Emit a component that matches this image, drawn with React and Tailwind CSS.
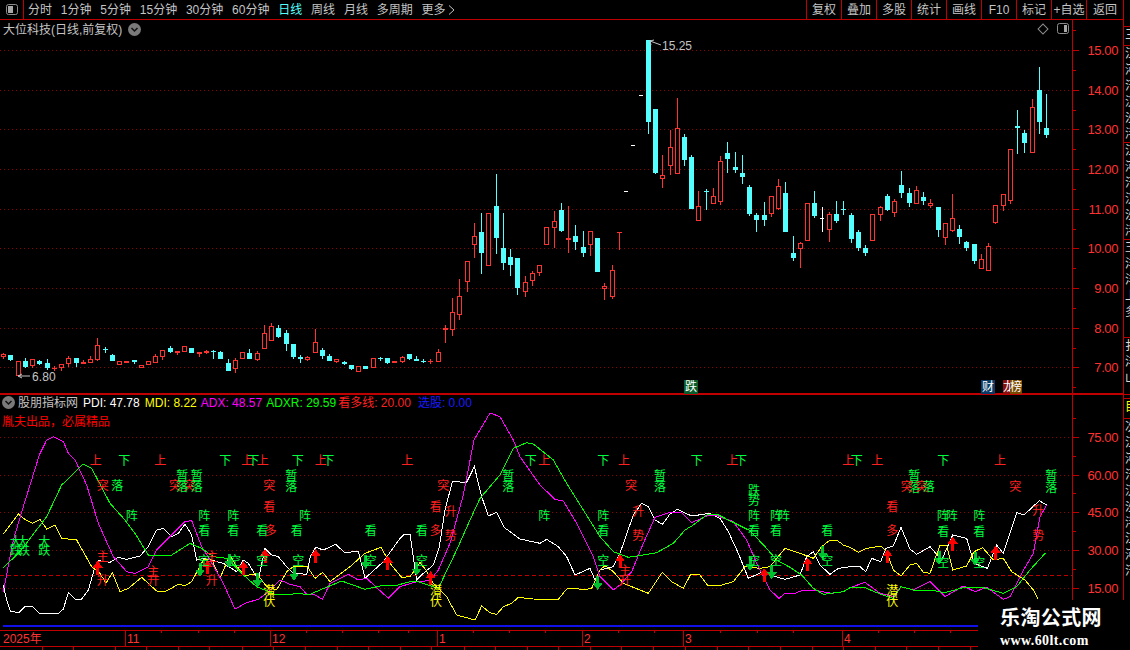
import React from 'react';

const RED = '#ff3232';
const CYAN = '#54ffff';
const GREEN_TXT = '#00ff40';

// candle rows are read off 3x crops: [x, wickTop, wickBottom, bodyTop, bodyBottom, colour]
const seg = (ox, oy, rows) =>
	rows.map(([x, wt, wb, bt, bb, c]) => ({
		x: ox + x / 3,
		wt: oy + wt / 3,
		wb: oy + wb / 3,
		bt: oy + bt / 3,
		bb: oy + bb / 3,
		c,
	}));

const candles = [
	...seg(0, 300, [
		[10, 160, 176, 162, 171, 'r'], [31, 165, 183, 165, 179, 'c'], [55, 183, 228, 184, 227, 'r'],
		[76, 175, 205, 183, 200, 'c'], [97, 178, 204, 178, 198, 'r'], [118, 179, 195, 183, 191, 'c'],
		[142, 178, 210, 189, 204, 'c'], [163, 197, 213, 204, 208, 'r'], [184, 193, 212, 193, 203, 'r'],
		[205, 168, 200, 174, 193, 'r'], [229, 175, 201, 175, 188, 'c'], [250, 180, 192, 186, 191, 'r'],
		[271, 168, 189, 177, 188, 'r'], [292, 113, 183, 136, 179, 'r'], [315, 141, 158, 148, 151, 'c'],
		[337, 162, 183, 166, 183, 'c'], [358, 183, 195, 183, 194, 'r'], [379, 184, 188, 184, 188, 'r'],
		[403, 181, 191, 181, 187, 'c'], [424, 194, 204, 196, 203, 'r'], [445, 184, 195, 184, 194, 'r'],
		[466, 162, 189, 169, 188, 'r'], [487, 151, 179, 151, 170, 'r'], [511, 138, 158, 144, 155, 'c'],
		[532, 153, 164, 154, 158, 'r'], [553, 138, 156, 139, 155, 'r'], [574, 144, 158, 144, 158, 'c'],
		[598, 156, 171, 157, 161, 'r'], [619, 150, 162, 154, 158, 'r'], [640, 150, 176, 152, 154, 'c'],
		[661, 153, 177, 157, 177, 'c'], [685, 177, 213, 189, 213, 'c'], [706, 174, 219, 181, 208, 'r'],
		[727, 156, 177, 157, 176, 'r'], [748, 147, 177, 159, 177, 'c'], [772, 153, 183, 160, 179, 'r'],
		[793, 75, 147, 100, 146, 'r'], [814, 69, 123, 79, 122, 'r'], [835, 75, 114, 84, 111, 'c'],
		[859, 90, 153, 100, 132, 'c'], [880, 132, 177, 132, 171, 'c'], [901, 165, 189, 171, 176, 'c'],
		[922, 168, 183, 171, 179, 'r'], [946, 87, 159, 127, 158, 'r'], [967, 144, 177, 151, 168, 'c'],
		[988, 162, 183, 168, 183, 'c'], [1009, 177, 189, 178, 185, 'r'], [1033, 182, 195, 186, 192, 'c'],
		[1054, 195, 209, 195, 207, 'c'], [1075, 198, 216, 199, 215, 'r'], [1096, 198, 207, 198, 207, 'c'],
		[1120, 174, 204, 175, 204, 'r'], [1141, 171, 183, 174, 177, 'c'], [1162, 174, 191, 174, 189, 'c'],
		[1183, 184, 188, 184, 188, 'r'], [1207, 168, 189, 172, 186, 'r'], [1228, 162, 180, 162, 177, 'c'],
		[1249, 168, 183, 178, 183, 'c'], [1270, 177, 190, 182, 185, 'c'], [1291, 177, 191, 183, 186, 'r'],
		[1315, 147, 186, 156, 185, 'r'], [1336, 75, 129, 85, 90, 'r'],
	]),
	{ x: 452, wt: 298, wb: 336, bt: 312, bb: 330, c: 'r' },
	{ x: 459, wt: 279, wb: 320, bt: 296, bb: 315, c: 'r' },
	...seg(430, 30, [
		[112, 694, 785, 694, 755, 'r'], [133, 580, 684, 619, 646, 'r'], [154, 549, 731, 606, 669, 'c'],
		[175, 549, 707, 549, 707, 'r'], [199, 432, 672, 528, 624, 'c'], [220, 549, 720, 654, 699, 'c'],
		[241, 657, 738, 681, 705, 'c'], [262, 684, 795, 684, 774, 'c'], [286, 738, 801, 757, 786, 'r'],
		[307, 724, 768, 729, 752, 'r'], [328, 705, 738, 705, 728, 'r'], [349, 591, 645, 591, 645, 'r'],
		[373, 543, 654, 573, 594, 'r'], [394, 519, 606, 540, 603, 'c'], [415, 528, 669, 624, 630, 'r'],
		[436, 585, 660, 618, 636, 'c'], [460, 603, 681, 651, 669, 'c'], [481, 603, 678, 603, 644, 'r'],
		[502, 624, 726, 624, 726, 'c'], [523, 759, 810, 768, 776, 'r'], [547, 705, 807, 720, 801, 'r'],
		[568, 606, 660, 606, 608, 'r'], [589, 483, 486, 483, 486, 'w'], [610, 345, 348, 345, 348, 'w'],
		[633, 195, 198, 195, 198, 'w'], [655, 30, 312, 30, 276, 'c'], [676, 237, 432, 237, 429, 'c'],
		[697, 375, 474, 435, 446, 'r'], [721, 300, 435, 351, 407, 'r'], [742, 204, 432, 294, 431, 'r'],
		[763, 312, 408, 321, 390, 'c'], [784, 375, 537, 381, 537, 'c'], [805, 483, 573, 528, 572, 'r'],
		[829, 477, 540, 483, 486, 'c'], [850, 474, 522, 498, 521, 'r'], [871, 378, 525, 393, 515, 'r'],
		[892, 336, 429, 369, 387, 'c'], [916, 366, 429, 411, 420, 'c'], [937, 375, 462, 429, 441, 'c'],
		[958, 465, 558, 471, 552, 'c'], [979, 549, 606, 555, 570, 'c'], [1003, 516, 588, 555, 570, 'c'],
		[1024, 498, 561, 498, 552, 'r'], [1045, 447, 540, 468, 537, 'r'],
	]),
	...seg(780, 30, [
		[16, 456, 606, 489, 606, 'c'], [40, 618, 693, 669, 684, 'c'], [61, 636, 714, 639, 656, 'r'],
		[82, 519, 633, 519, 632, 'r'], [103, 483, 564, 519, 558, 'c'], [127, 531, 606, 564, 567, 'w'],
		[148, 546, 636, 552, 599, 'r'], [169, 513, 579, 552, 573, 'c'], [190, 513, 555, 537, 540, 'c'],
		[214, 549, 639, 555, 627, 'c'], [235, 600, 663, 606, 654, 'c'], [256, 645, 678, 654, 669, 'c'],
		[277, 552, 633, 552, 632, 'r'], [301, 528, 573, 531, 554, 'r'], [322, 492, 543, 498, 540, 'c'],
		[343, 507, 561, 514, 548, 'r'], [364, 423, 504, 465, 489, 'c'], [388, 474, 531, 489, 519, 'c'],
		[409, 468, 522, 480, 521, 'r'], [430, 486, 525, 501, 513, 'c'], [451, 507, 534, 520, 527, 'r'],
		[475, 531, 621, 531, 600, 'c'], [496, 579, 645, 579, 623, 'r'], [517, 492, 606, 564, 603, 'r'],
		[538, 585, 642, 597, 621, 'c'], [559, 633, 663, 636, 654, 'c'], [583, 642, 702, 642, 693, 'c'],
		[604, 672, 717, 687, 716, 'r'], [625, 639, 723, 648, 722, 'r'], [646, 525, 582, 525, 579, 'r'],
		[670, 492, 543, 492, 528, 'r'], [691, 357, 522, 357, 513, 'r'], [712, 240, 372, 288, 293, 'c'],
		[733, 300, 369, 309, 339, 'c'], [757, 207, 369, 232, 369, 'r'], [778, 111, 312, 180, 276, 'c'],
		[799, 192, 324, 294, 315, 'c'],
	]),
];

// turns crop coordinates into page coordinates, joined into a points string
const pts = (...parts) =>
	parts
		.flatMap(([ox, oy, list]) => list.map(([x, y]) => `${ox + x / 3},${oy + y / 3}`))
		.join(' ');

const whiteLine = pts(
	[0, 440, [[10, 435], [20, 480], [31, 513], [45, 516], [57, 517], [75, 499], [97, 499], [118, 520], [175, 520], [190, 507], [205, 458], [225, 477], [245, 477], [265, 450], [285, 380], [295, 362], [330, 367], [355, 352], [380, 358], [420, 348], [445, 320], [470, 270], [490, 265], [515, 290], [535, 280], [555, 252], [575, 285], [590, 360], [610, 355], [640, 362], [670, 370], [710, 395], [730, 360], [745, 370], [775, 420], [795, 325], [815, 345], [835, 350], [860, 380], [880, 400]]],
	[300, 440, [[0, 400], [20, 405], [31, 350], [47, 322], [70, 330], [107, 313], [133, 337], [175, 335], [195, 415], [250, 365], [300, 295], [310, 285], [330, 283], [350, 420], [370, 400], [400, 375], [418, 320], [435, 210], [457, 125], [500, 127], [523, 80], [545, 170], [565, 228], [590, 217], [612, 262], [660, 297], [720, 310], [740, 298], [775, 320], [800, 350], [825, 405], [870, 385], [885, 420]]],
	[600, 440, [[0, 390], [40, 380], [60, 340], [100, 225], [125, 190], [145, 200], [165, 240], [187, 253], [210, 222], [232, 208], [275, 228], [330, 220], [360, 235], [385, 275], [415, 340], [445, 415], [490, 395], [510, 405], [555, 418], [600, 405], [620, 350], [640, 335], [660, 375], [690, 403], [715, 385]]],
	[850, 370, [[0, 590], [30, 590], [47, 605], [65, 565], [92, 575], [108, 535], [130, 528], [153, 472], [180, 537], [200, 553], [240, 530], [275, 570], [308, 495], [350, 505], [372, 580], [412, 595], [440, 525], [460, 550], [500, 428], [522, 435], [568, 392], [590, 405]]],
);

const yellowLine = pts(
	[0, 440, [[10, 282], [55, 222], [70, 235], [97, 250], [120, 238], [140, 267], [165, 255], [185, 295], [230, 300], [275, 380], [300, 400], [318, 430], [337, 398], [360, 455], [385, 445], [425, 412], [470, 453], [495, 455], [535, 433], [555, 437], [575, 425], [610, 360], [635, 358], [660, 415], [690, 345], [710, 380], [735, 408], [770, 400], [800, 440], [830, 450], [860, 395], [880, 380]]],
	[300, 440, [[0, 380], [22, 380], [45, 415], [68, 397], [90, 425], [150, 380], [195, 340], [243, 322], [270, 370], [305, 412], [330, 410], [360, 368], [378, 390], [400, 430], [440, 470], [470, 525], [525, 540], [545, 498], [570, 518], [590, 523], [610, 500], [635, 490], [655, 472], [700, 477], [775, 478], [800, 447], [830, 445], [850, 450], [875, 445]]],
	[600, 440, [[0, 390], [15, 377], [40, 395], [70, 430], [145, 460], [187, 397], [215, 425], [250, 445], [272, 403], [300, 405], [322, 435], [365, 435], [400, 425], [435, 380], [480, 385], [510, 380], [555, 325], [600, 340], [640, 355], [665, 320], [690, 300], [710, 300], [730, 315]]],
	[850, 370, [[0, 532], [25, 547], [50, 535], [92, 528], [110, 545], [130, 600], [153, 618], [180, 585], [200, 580], [220, 607], [240, 610], [270, 525], [290, 525], [308, 600], [350, 588], [372, 545], [398, 533], [430, 570], [460, 565], [485, 605], [525, 630], [550, 660], [565, 688]]],
);

const greenLine = pts(
	[0, 440, [[10, 383], [60, 335], [140, 230], [185, 135], [250, 72], [275, 85], [330, 190], [375, 240], [405, 280], [445, 345], [515, 345], [570, 310], [605, 325], [640, 350], [680, 355], [725, 400], [770, 440], [830, 465], [870, 463]]],
	[300, 440, [[0, 460], [25, 465], [60, 450], [125, 423], [195, 448], [240, 438], [290, 436], [330, 425], [355, 425], [415, 445], [470, 330], [510, 240], [540, 175], [600, 105], [640, 25], [680, 8], [700, 12], [760, 60], [800, 130], [850, 210]]],
	[600, 440, [[0, 290], [40, 335], [85, 352], [130, 345], [170, 338], [220, 310], [255, 270], [280, 255], [320, 225], [350, 222], [385, 240], [450, 272], [495, 320], [530, 360], [570, 382], [605, 405], [640, 445], [670, 463], [730, 455]]],
	[850, 370, [[0, 653], [45, 653], [90, 672], [130, 685], [153, 650], [190, 660], [240, 660], [285, 668], [340, 653], [400, 653], [460, 670], [500, 650], [540, 600], [587, 548]]],
);

const magentaLine = pts(
	[0, 440, [[10, 455], [40, 300], [70, 200], [118, 45], [140, 0], [160, -10], [190, 5], [205, 40], [225, 60], [260, 135], [295, 250], [340, 350], [380, 395], [405, 400], [445, 380], [470, 330], [520, 280], [555, 245], [575, 242], [605, 320], [630, 360], [670, 430], [705, 507], [740, 488], [775, 478], [800, 460], [840, 420], [870, 433]]],
	[300, 440, [[0, 440], [20, 463], [45, 465], [67, 478], [90, 430], [145, 403], [175, 420], [200, 415], [265, 475], [300, 440], [350, 425], [390, 422], [415, 390], [450, 310], [490, 165], [522, 0], [570, -81], [600, -70], [640, 0], [660, 50], [720, 135], [765, 178], [790, 183], [830, 250], [880, 350]]],
	[600, 440, [[0, 410], [40, 450], [60, 435], [95, 395], [130, 310], [165, 232], [210, 217], [245, 218], [275, 248], [320, 228], [345, 225], [400, 245], [440, 300], [470, 370], [510, 450], [537, 475], [555, 460], [585, 460], [605, 452], [650, 452], [695, 460], [730, 455]]],
	[850, 370, [[0, 653], [45, 637], [90, 670], [130, 680], [153, 650], [190, 660], [240, 635], [285, 680], [340, 648], [375, 665], [410, 652], [460, 688], [480, 680], [515, 610], [550, 550], [570, 440], [590, 405]]],
);

// arrows in 3x page x, y measured from 440
const redArrows = [
	[293, 362], [622, 360], [730, 363], [795, 327],
	[947, 327], [1163, 347], [1292, 393],
	[1860, 343], [2293, 385], [2423, 352], [2663, 328],
	[2858, 290], [2987, 317],
];
const greenArrows = [
	[600, 410], [687, 383], [773, 442], [882, 422],
	[1097, 387], [1250, 407], [1793, 450],
	[2250, 392], [2315, 418], [2468, 360],
	[2817, 375], [2925, 377],
];

const G = GREEN_TXT;
const R = '#ff2020';
const Y = '#ffff00';

// [character, x, y] in 3x page coordinates, y measured from 440
const marks = [
	['大', 47, 303, G], ['大', 68, 303, G], ['大', 133, 303, G],
	['跌', 47, 330, G], ['跌', 72, 330, G], ['跌', 133, 330, G],
	['上', 287, 60, R], ['下', 373, 60, G], ['上', 481, 60, R], ['下', 676, 60, G],
	['上', 742, 60, R], ['下', 760, 60, G], ['上', 788, 60, R], ['下', 893, 60, G],
	['突', 308, 135, R], ['落', 352, 135, G],
	['突', 525, 135, R], ['突', 568, 135, R],
	['暂', 547, 105, G], ['暂', 590, 105, G], ['落', 547, 138, G], ['落', 590, 138, G],
	['突', 808, 135, R], ['暂', 874, 105, G], ['落', 874, 138, G], ['看', 808, 197, R],
	['阵', 395, 225, G], ['阵', 613, 225, G], ['阵', 700, 225, G],
	['看', 613, 270, G], ['看', 700, 270, G], ['看', 787, 270, G], ['看', 890, 270, G], ['多', 812, 270, R],
	['主', 308, 347, R], ['主', 635, 347, R], ['升', 308, 420, R], ['升', 635, 420, R],
	['主', 460, 392, R], ['升', 460, 420, R],
	['空', 612, 360, G], ['空', 705, 360, G], ['空', 787, 360, G], ['空', 895, 360, G],
	['潜', 808, 450, Y], ['伏', 808, 483, Y],
	// second stretch
	['上', 962, 60, R], ['下', 985, 60, G], ['上', 1222, 60, R], ['下', 1592, 60, G], ['上', 1633, 60, R],
	['阵', 915, 225, G], ['看', 1112, 270, G], ['看', 1265, 270, G], ['空', 1112, 360, G], ['空', 1265, 360, G],
	['突', 1330, 135, R], ['看', 1307, 197, R], ['升', 1352, 212, R], ['多', 1307, 270, R], ['势', 1352, 285, R],
	['暂', 1525, 105, G], ['落', 1525, 138, G], ['阵', 1633, 225, G],
	['潜', 1308, 450, Y], ['伏', 1308, 483, Y],
	// third stretch
	['下', 1810, 60, G], ['上', 1872, 60, R], ['下', 2090, 60, G], ['上', 2197, 60, R], ['下', 2223, 60, G],
	['上', 2545, 60, R], ['下', 2570, 60, G], ['上', 2632, 60, R],
	['阵', 1810, 225, G], ['看', 1810, 270, G], ['空', 1810, 360, G],
	['突', 1893, 135, R], ['暂', 1980, 105, G], ['落', 1980, 138, G], ['升', 1915, 212, R], ['势', 1915, 285, R],
	['主', 1875, 390, R], ['升', 1875, 420, R],
	['跌', 2262, 150, G], ['势', 2262, 180, G],
	['阵', 2262, 225, G], ['阵', 2328, 225, G], ['阵', 2352, 225, G],
	['看', 2262, 270, G], ['看', 2328, 270, G], ['看', 2482, 270, G],
	['空', 2262, 360, G], ['空', 2328, 360, G], ['空', 2482, 360, G],
	['看', 2677, 197, R], ['多', 2677, 270, R], ['潜', 2677, 450, Y], ['伏', 2677, 483, Y],
	// last stretch
	['暂', 2743, 105, G], ['落', 2743, 140, G], ['突', 2720, 138, R], ['突', 2765, 138, R], ['落', 2786, 138, G],
	['阵', 2828, 225, G], ['阵', 2855, 225, G], ['阵', 2938, 225, G], ['看', 2830, 273, G], ['看', 2938, 273, G],
	['下', 2830, 60, G], ['上', 3000, 60, R], ['空', 2830, 365, G], ['空', 2938, 365, G],
	['突', 3046, 138, R], ['暂', 3154, 105, G], ['落', 3154, 140, G], ['升', 3115, 210, R], ['势', 3115, 285, R],
];

const TABS = ['分时', '1分钟', '5分钟', '15分钟', '30分钟', '60分钟', '日线', '周线', '月线', '多周期', '更多'];
const TOOLS = ['复权', '叠加', '多股', '统计', '画线', 'F10', '标记', '+自选'];

const PRICE_AXIS = [
	['15.00', 50], ['14.00', 90], ['13.00', 129], ['12.00', 169], ['11.00', 209],
	['10.00', 248], ['9.00', 288], ['8.00', 328], ['7.00', 367],
];
const IND_AXIS = [['75.00', 437], ['60.00', 475], ['45.00', 512], ['30.00', 550], ['15.00', 588]];

const STRIP = [
	{ h: 27, rows: '' },
	{ h: 19, rows: '三' },
	{ h: 97, rows: '江河汗汉沙泮' },
	{ h: 97, rows: '江河汗汉沙泮' },
	{ h: 98, rows: '王洋洋上多' },
	{ h: 57, rows: '扌洋山' },
	{ h: 4, rows: '' },
	{ h: 20, rows: '目', y: true },
	{ h: 232, rows: '次江河汗汉沙泮江河汗' },
];

const Candle = ({ d }) => {
	const X = Math.round(d.x - 0.5);
	const color = d.c === 'r' ? RED : d.c === 'c' ? CYAN : '#ffffff';
	const top = Math.round(d.bt);
	const h = Math.max(1, Math.round(d.bb) - top);
	const wide = d.c === 'w' ? 4 : 5;
	return (
		<g>
			<rect x={X} y={d.wt} width="1" height={Math.max(1, d.wb - d.wt)} fill={color} />
			{d.c === 'r' && h > 2 ? (
				<rect x={X - 1.5} y={top + 0.5} width="4" height={h - 1} fill="#000" stroke={color} />
			) : (
				<rect x={X - 2} y={top} width={wide} height={h} fill={color} />
			)}
		</g>
	);
};

const Grid = ({ rows }) =>
	rows.map((y) => (
		<line key={y} x1="0" x2="1072" y1={y + 0.5} y2={y + 0.5} stroke="#900000" strokeDasharray="1 3" />
	));

const Axis = ({ top, height, rows, minor }) => (
	<svg width="50" height={height} viewBox={`1073 ${top} 50 ${height}`} className="block shrink-0">
		{rows.map(([t, y]) => (
			<g key={t}>
				<rect x="1073" y={y} width="6" height="1" fill="#c00000" />
				<text x="1118" y={y + 5} textAnchor="end" fontSize="13" letterSpacing="-0.4" fill={RED}>
					{t}
				</text>
			</g>
		))}
		{minor.map((y) => (
			<rect key={y} x="1073" y={y} width="3" height="1" fill="#c00000" />
		))}
	</svg>
);

const ChevronDot = () => (
	<svg width="13" height="13" viewBox="0 0 13 13" className="shrink-0">
		<circle cx="6.5" cy="6.5" r="6.5" fill="#7a7a7a" />
		<path d="M3.5 5l3 3 3-3" fill="none" stroke="#111" strokeWidth="1.5" />
	</svg>
);

const SplitIcon = ({ right }) => (
	<svg width="12" height="11" viewBox="0 0 12 11">
		<rect x="0.5" y="0.5" width="11" height="10" rx="2" fill="#000" stroke="#8c8c8c" />
		<rect x={right ? 7 : 2} y="2" width="3" height="7" fill="#a8a8a8" />
		{!right && <rect x="5" y="2" width="2" height="7" fill="#a8a8a8" />}
	</svg>
);

export default function App() {
	return (
		<div className="relative flex h-[650px] w-[1130px] overflow-hidden bg-black font-['Liberation_Sans','Noto_Sans_CJK_SC',sans-serif] text-[12px] leading-none text-[#c4c4c4]">
			<div className="flex w-[1124px] shrink-0 flex-col border-r border-[#c00000]">
				{/* toolbar */}
				<div className="flex h-[20px] shrink-0 items-center border-b border-[#c00000]">
					<div className="flex h-full w-[24px] items-center justify-center border-r border-[#c00000]">
						<SplitIcon />
					</div>
					<div className="ml-[4px] flex items-center gap-[8.8px]">
						{TABS.map((t) => (
							<span key={t} className={t === '日线' ? 'text-[#54ffff]' : ''}>
								{t}
							</span>
						))}
						<svg width="7" height="10" viewBox="0 0 7 10" className="-ml-[6px]">
							<path d="M1 0.5l5 4.5-5 4.5" fill="none" stroke="#c4c4c4" />
						</svg>
					</div>
					<div className="ml-auto flex h-full">
						{TOOLS.map((t) => (
							<div key={t} className="flex w-[35px] items-center justify-center border-l border-[#c00000]">
								{t}
							</div>
						))}
						<div className="flex w-[37px] items-center justify-center border-l border-[#c00000]">返回</div>
					</div>
				</div>

				{/* price panel */}
				<div className="flex h-[375px] shrink-0 border-b-2 border-[#c00000]">
					<div className="relative w-[1073px] shrink-0 border-r border-[#c00000]">
						<svg width="1072" height="373" viewBox="0 20 1072 373" className="block" shapeRendering="crispEdges">
							<Grid rows={[50, 90, 129, 169, 209, 248, 288, 328, 367]} />
							{candles.map((d, i) => (
								<Candle key={i} d={d} />
							))}
							<g shapeRendering="auto" fill="#c4c4c4" fontSize="12">
								<path d="M650 41l11 4M650 41l1 4M650 41l4 -1" stroke="#c4c4c4" fill="none" />
								<text x="662" y="50" letterSpacing="0">15.25</text>
								<path d="M18 376h12M18 376l4 -2M18 376l4 2" stroke="#c4c4c4" fill="none" />
								<text x="32" y="381" letterSpacing="0.1">6.80</text>
							</g>
						</svg>
						<div className="absolute left-[3px] top-[3px] flex items-center gap-[6px]">
							<span>大位科技(日线,前复权)</span>
							<ChevronDot />
						</div>
						<div className="absolute left-[1039px] top-[3px] flex items-center gap-[10px]">
							<span className="block h-[8px] w-[8px] rotate-45 border border-[#8c8c8c]" />
							<SplitIcon right />
						</div>
						<span className="absolute left-[684px] top-[360px] bg-[#0a5c2a] px-[1px] py-[1px] text-white">跌</span>
						<span className="absolute left-[981px] top-[360px] bg-[#0c3a66] px-[1px] py-[1px] text-white">财</span>
						<div className="absolute left-[1003px] top-[360px] flex text-white">
							<span className="w-[7px] overflow-hidden bg-[#8a1010] py-[1px]">龙</span>
							<span className="bg-[#7a4a00] py-[1px]">榜</span>
						</div>
					</div>
					<Axis
						top={20}
						height={373}
						rows={PRICE_AXIS}
						minor={[70, 110, 149, 189, 229, 268, 308, 348, 387, 30]}
					/>
				</div>

				{/* indicator panel */}
				<div className="flex h-[235px] shrink-0">
					<div className="relative w-[1073px] shrink-0 border-r border-[#c00000]">
						<svg width="1072" height="235" viewBox="0 395 1072 235" className="block" shapeRendering="crispEdges">
							<Grid rows={[437, 475, 512, 550, 588]} />
							<line x1="0" x2="1072" y1="575.5" y2="575.5" stroke="#c00000" strokeDasharray="4 3" />
							<polyline points={whiteLine} fill="none" stroke="#ffffff" />
							<polyline points={yellowLine} fill="none" stroke="#ffff00" />
							<polyline points={magentaLine} fill="none" stroke="#ff00ff" />
							<polyline points={greenLine} fill="none" stroke="#00ff00" />
							{greenArrows.map(([x, y]) => {
								const cx = x / 3;
								const b = 440 + y / 3;
								return (
									<path
										key={x}
										fill="#00c030"
										d={`M${cx} ${b}l5 -7h-3.5v-7h-3v7h-3.5z`}
									/>
								);
							})}
							{redArrows.map(([x, y]) => {
								const cx = x / 3;
								const t = 440 + y / 3;
								return (
									<path
										key={x}
										fill="#ff0000"
										d={`M${cx} ${t}l5 7h-3.5v7h-3v-7h-3.5z`}
									/>
								);
							})}
							<g fontSize="12" textAnchor="middle" shapeRendering="auto">
								{marks.map(([ch, x, y, color], i) => (
									<text key={i} x={x / 3} y={440 + y / 3 + 5} fill={color}>
										{ch}
									</text>
								))}
							</g>
							<rect x="3" y="625" width="975" height="2" fill="#1010e8" />
						</svg>
						<div className="absolute left-[2px] top-[1px] flex h-[13px] items-center gap-[5px]">
							<ChevronDot />
							<span className="-ml-[2px]">股朋指标网</span>
							<span className="text-white">PDI: 47.78</span>
							<span className="text-[#ffff00]">MDI: 8.22</span>
							<span className="-ml-[1px] text-[#ff00ff]">ADX: 48.57</span>
							<span className="-ml-[1px] text-[#00ff00]">ADXR: 29.59</span>
							<span className="-ml-[3px] text-[#ff2020]">看多线: 20.00</span>
							<span className="ml-[2px] text-[#1a1aff]">选股: 0.00</span>
						</div>
						<span className="absolute left-[2px] top-[21px] text-[#ff0000]">胤夫出品，必属精品</span>
					</div>
					<Axis
						top={395}
						height={235}
						rows={IND_AXIS}
						minor={[418, 456, 493, 531, 569]}
					/>
				</div>

				{/* time axis */}
				<div className="flex-1 border-t border-[#c00000]">
					<svg width="1123" height="19" viewBox="0 631 1123 19" className="block" shapeRendering="crispEdges">
						<rect x="0" y="646" width="1123" height="1" fill="#c00000" />
						{[125, 270, 437, 582, 683, 842].map((x) => (
							<rect key={x} x={x} y="631" width="1" height="15" fill="#c00000" />
						))}
						{[161, 198, 234, 306, 342, 378, 408, 473, 509, 545, 618, 654, 720, 757, 793, 878, 914, 950].map((x) => (
							<rect key={x} x={x} y="631" width="1" height="2" fill="#c00000" />
						))}
						{[42, 73, 115, 146, 178, 209, 242, 273, 305, 337, 368, 400, 431, 464, 495, 527, 558, 590, 621, 653, 685, 717, 748, 780, 812, 843, 875, 906, 938, 970].map((x) => (
							<rect key={x} x={x} y="647" width="1" height="3" fill="#c00000" />
						))}
						<g fill={RED} fontSize="12" shapeRendering="auto">
							<text x="3" y="643">2025年</text>
							<text x="127" y="643">11</text>
							<text x="272" y="643">12</text>
							<text x="439" y="643">1</text>
							<text x="584" y="643">2</text>
							<text x="685" y="643">3</text>
							<text x="844" y="643">4</text>
						</g>
					</svg>
				</div>
			</div>

			{/* clipped list on the far right */}
			<div className="flex w-[6px] shrink-0 flex-col overflow-hidden">
				{STRIP.map((s, i) => (
					<div
						key={i}
						style={{ height: s.h }}
						className={`shrink-0 overflow-hidden border-b border-[#c00000] pl-[1px] ${s.y ? 'text-[#ffff00]' : 'text-[#d8d8d8]'}`}
					>
						{s.rows.split('').map((c, j) => (
							<div key={j} className="h-[16px] w-[14px] pt-[2px]">
								{c}
							</div>
						))}
					</div>
				))}
			</div>

			{/* watermark */}
			<div className="absolute left-[978px] top-[600px] flex h-[50px] w-[152px] flex-col items-start bg-black pl-[22px] pt-[8px]">
				<span className="text-[20px] font-bold text-white [letter-spacing:0.4px]">乐淘公式网</span>
				<span className="mt-[6px] font-['Liberation_Serif',serif] text-[14px] font-bold text-white [letter-spacing:0.4px]">www.60lt.com</span>
			</div>
		</div>
	);
}
